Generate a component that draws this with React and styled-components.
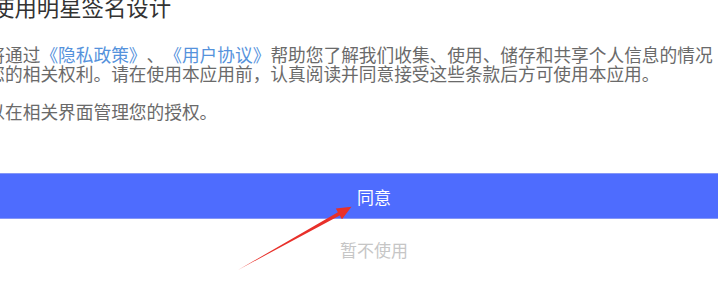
import React from "react";
import styled, { createGlobalStyle } from "styled-components";

const GlobalStyle = createGlobalStyle`
  html, body {
    margin: 0;
    padding: 0;
    background: #ffffff;
    width: 718px;
    height: 292px;
    overflow: hidden;
  }
  body {
    font-family: "Noto Sans CJK SC", "Noto Sans", sans-serif;
    text-spacing-trim: space-all;
  }
`;

const Dialog = styled.div`
  position: relative;
  width: 718px;
  height: 292px;
  overflow: hidden;
  display: flex;
  flex-direction: column;
`;

const Title = styled.h1`
  margin: -5px 0 0 -8px;
  font-size: 22.4px;
  line-height: 22px;
  font-weight: 400;
  color: #333333;
  white-space: nowrap;
`;

const Body = styled.div`
  margin: 27.5px 0 0 -12.7px;
  width: 740px;
  flex-shrink: 0;
  font-size: 17.7px;
  line-height: 19px;
  color: #6a6a6a;
  display: flex;
  flex-direction: column;
  text-spacing-trim: space-all;
`;

const Line = styled.div`
  white-space: nowrap;
  height: 19px;
  margin-bottom: ${(p) => (p.$gap ? "19px" : "0")};
`;

const Link = styled.span`
  color: #5592dc;
`;

const AgreeButton = styled.button`
  margin: 52.5px 0 0 -30px;
  width: calc(100% + 90px);
  height: 46px;
  box-sizing: border-box;
  border: none;
  border-top: 1px solid #8597f7;
  border-bottom: 1px solid #8597f7;
  background: #4e6cfe;
  color: #ffffff;
  font-family: "Noto Sans CJK SC", sans-serif;
  font-size: 17px;
  padding: 0;
  display: flex;
  align-items: center;
  justify-content: center;
`;

const DeclineButton = styled.button`
  margin: 0 0 0 -30px;
  width: calc(100% + 90px);
  height: 60px;
  border: none;
  background: transparent;
  color: #c6c6c6;
  font-family: "Noto Sans CJK SC", sans-serif;
  font-size: 17px;
  padding: 0;
  display: flex;
  align-items: center;
  justify-content: center;
`;

const ArrowOverlay = styled.svg`
  position: absolute;
  left: 0;
  top: 0;
  width: 718px;
  height: 292px;
  pointer-events: none;
`;

export default function App() {
  return (
    <>
      <GlobalStyle />
      <Dialog>
        <Title>使用明星签名设计</Title>
        <Body>
          <Line>
            将通过<Link>《隐私政策》</Link>、<Link>《用户协议》</Link>帮助您了解我们收集、使用、储存和共享个人信息的情况
          </Line>
          <Line $gap>您的相关权利。请在使用本应用前，认真阅读并同意接受这些条款后方可使用本应用。</Line>
          <Line>以在相关界面管理您的授权。</Line>
        </Body>
        <AgreeButton>同意</AgreeButton>
        <DeclineButton>暂不使用</DeclineButton>
        <ArrowOverlay viewBox="0 0 718 292">
          <polygon
            points="238,270 339.7,215.4 342,219.2 351.5,206.8 335.8,208.6 337.9,212.2"
            fill="#e8302a"
          />
        </ArrowOverlay>
      </Dialog>
    </>
  );
}
